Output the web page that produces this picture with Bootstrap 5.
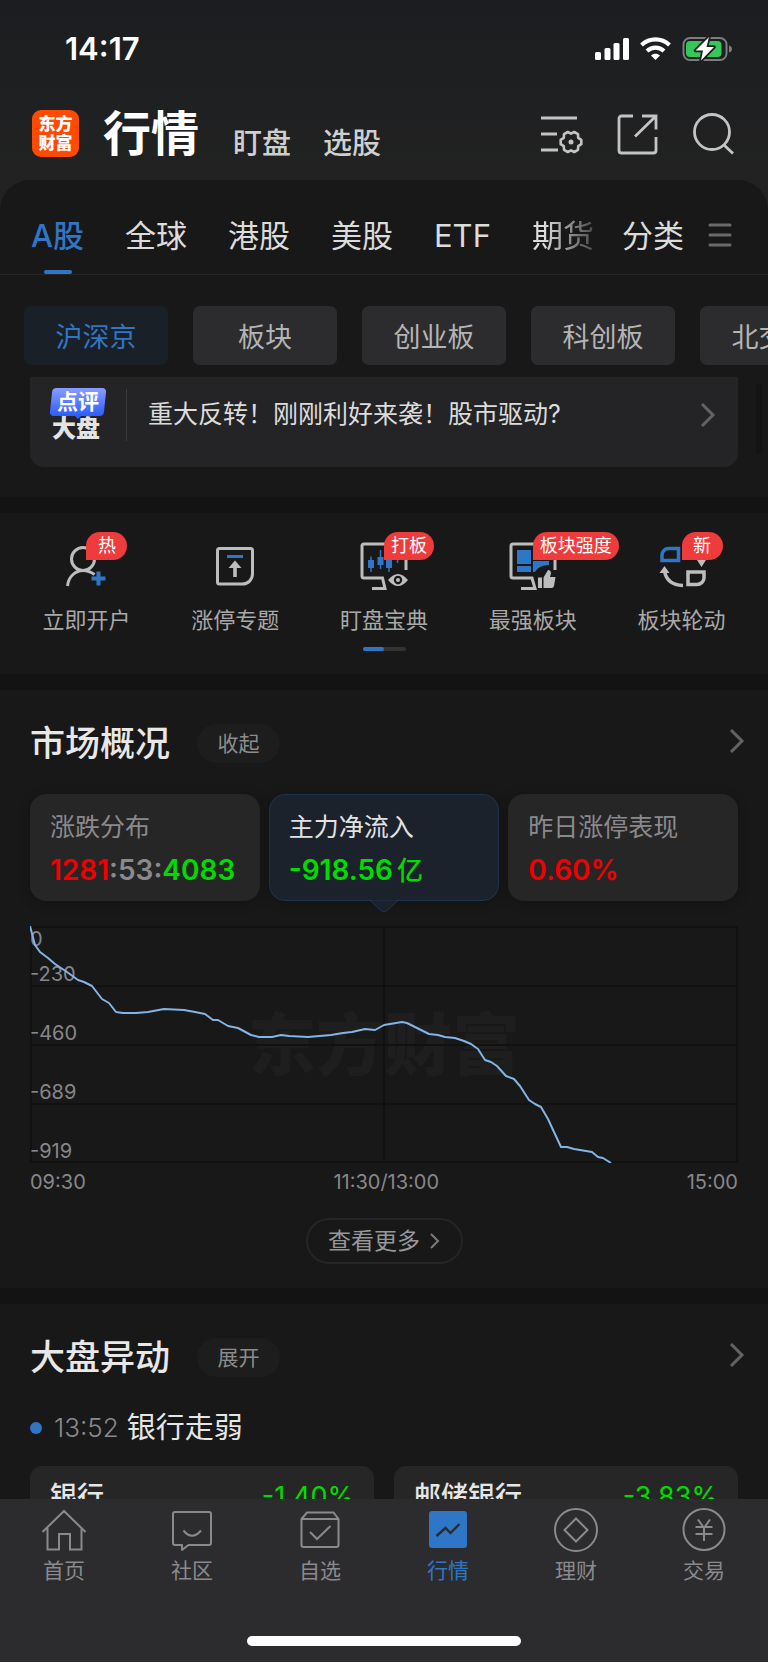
<!DOCTYPE html>
<html lang="zh-CN" data-bs-theme="dark">
<head>
<meta charset="utf-8">
<meta name="viewport" content="width=device-width, initial-scale=1">
<title>行情</title>
<link rel="stylesheet" href="https://cdn.jsdelivr.net/npm/bootstrap@5.3.0/dist/css/bootstrap.min.css">
<style>
:root{--blue:#2f76c6;--panel:#181818;--band:#131313;--tile:#262626;--muted:#8a8a8e;--up:#f00000;--down:#00dc00}
body{background:#1e1f21;color:#e6e6e6;font-family:Inter,"Noto Sans CJK SC",sans-serif}
a{color:inherit;text-decoration:none}
button{font-family:inherit}
svg{display:block;flex:none;fill:none}
.shell{background:linear-gradient(#1c1d20,#1f2021 100px,#222 190px)}
.statusbar{height:98px;padding:0 36px 0 65px;font-size:31px;font-weight:600;line-height:30px;color:#fff}
.topbar{padding:12px 33px 22px 32px}
.logo{width:47px;height:47px;border-radius:9px;background:#ff4a00;color:#fff;font-size:17px;line-height:19px;font-weight:900}
.topbar h1{font-size:48px;line-height:48px;font-weight:700;color:#fff;margin:0 34px 0 24px}
.topbar .sub{font-size:29px;line-height:29px;font-weight:500;color:#cfcfcf;margin-right:32px}
.tools{gap:34px;color:#c4c4c4}
.plain{background:none;border:0;padding:0;color:inherit}
.sheet{background:var(--panel);border-radius:30px 30px 0 0;min-height:0;overflow:auto;scrollbar-width:none}
.sheet::-webkit-scrollbar{display:none}
.markets{padding:0 36px 0 31px;border-bottom:1px solid #252525;font-size:31px;line-height:31px}
.markets a{padding:40px 0 23px;position:relative;white-space:nowrap;color:#dcdcdc}
.markets .tabs{gap:41px}
.markets .on{color:var(--blue);font-weight:500}
.markets .on::after{content:"";position:absolute;bottom:0;left:13px;width:28px;height:4px;border-radius:2px;background:var(--blue)}
.markets .plain{padding-top:16px}
.markets .fade-end{-webkit-mask-image:linear-gradient(90deg,#000 20%,rgba(0,0,0,.25));mask-image:linear-gradient(90deg,#000 20%,rgba(0,0,0,.25))}
.chips{gap:25px;padding:31px 0 0 24px;overflow:hidden}
.chip{flex:0 0 144px;height:59px;border:0;border-radius:7px;background:#2c2c2e;color:#b4b4b4;font-size:27px;line-height:27px;padding:4px 0 0}
.chip.on{background:#1a2028;color:var(--blue)}
.newsrow{padding:12px 30px 30px;position:relative}
.newsrow::after{content:"";position:absolute;right:6px;top:19px;width:6px;height:70px;background:#141414}
.newscard{height:90px;background:#242426;border-radius:0 0 14px 14px;padding:0 22px 14px 20px;color:#dcdcdc;font-size:25px}
.review{width:56px;text-align:center;line-height:24px}
.review .t1{position:relative;z-index:0;height:28px;line-height:28px;font-size:21px;font-weight:700;color:#fff}
.review .t1::before{content:"";position:absolute;z-index:-1;inset:0 1px;border-radius:4px;background:linear-gradient(#8a9cff,#2b5dff);transform:skewX(-6deg)}
.review .t1::after{content:"";position:absolute;left:24px;top:27px;border:4px solid transparent;border-top-color:#2b5dff;border-bottom:0}
.review .t2{font-size:24px;font-weight:900;color:#e4e4e4;line-height:26px;padding-right:4px}
.rule{width:1px;height:52px;background:#3a3a3c;margin:0 21px 0 20px}
.band{border-top:16px solid var(--band)}
.quick{padding:27px 12px 23px}
.quick a{position:relative;flex:1 1 0;color:#a9a9a9;font-size:22px;line-height:22px}
.quick svg{margin:0 auto 19px}
.tagged{position:absolute;left:50%;top:-8px;min-width:41px;height:28px;padding:0 7px;border-radius:14px 14px 14px 0;background:#ee3b3b;color:#fff;font-size:18px;line-height:28px;text-align:center;white-space:nowrap}
.pager{width:43px;height:4px;border-radius:2px;background:#333;margin:16px auto 0}
.pager i{display:block;width:50%;height:4px;border-radius:2px;background:var(--blue)}
.block-pad{padding:33px 30px 24px}
.sec-head{height:40px;margin-right:-7px}
.sec-head h2{font-size:35px;line-height:35px;font-weight:500;margin:0 27px 0 0;color:#e8e8e8}
.sec-head a{padding-bottom:4px}
.pill{width:83px;height:39px;border:0;border-radius:20px;background:#1d1d1d;color:#8c8c8c;font-size:21px;line-height:21px}
.stats{gap:9px;margin-top:31px}
.stat{position:relative;flex:1 1 0;height:107px;text-align:left;border:0;border-radius:16px;background:var(--tile);padding:20px 0 17px 20px;color:var(--muted);box-shadow:0 2px 12px rgba(0,0,0,.25);font-size:25px;line-height:26px}
.stat b{display:block;font-size:28px;line-height:28px;font-weight:600;margin-top:16px;white-space:nowrap}
.stat b .unit{font-size:26px;font-weight:500;margin-left:4px}
.stat.on{background:#1b222c;color:#e2e2e2;border:1px solid #1f3450;padding:19px 0 16px 19px}
.stat.on svg{position:absolute;left:50%;top:104px;margin-left:-14px}
.up{color:var(--up)}.down{color:var(--down)}
.chart{position:relative;margin-top:25px;height:237px;color:#87878b;font-size:20px;line-height:20px}
.chart svg{position:absolute;inset:0;width:100%;height:100%}
.watermark{position:absolute;inset:0;display:flex;align-items:center;justify-content:center;font-size:68px;line-height:68px;font-weight:900;color:#1e1e1e}
.scale{position:absolute;inset:3px 0 0}
.scale span{flex:0 0 59px}
.scale .zero{flex-basis:35px}
.times{margin-top:9px;color:#87878b;font-size:20px;line-height:20px}
.more{width:157px;height:46px;margin:26px auto 0;border:2px solid #252525;border-radius:23px;background:none;color:#97979b;font-size:23px;line-height:23px;gap:10px}
.event{margin-top:36px;font-size:29px;line-height:30px}
.event i{width:12px;height:12px;border-radius:50%;background:var(--blue);margin-right:12px}
.event time{font-size:26px;font-weight:300;color:var(--muted);margin-right:8px}
.movers{gap:20px;margin-top:23px}
.mover{flex:1 1 0;height:120px;border-radius:12px;background:var(--tile);padding:17px 20px;font-size:27px;line-height:27px;font-weight:500}
.mover .down{font-weight:400}
.tabbar{background:#2c2c2e;border-bottom:1px solid #fff;padding:9px 0 16px;color:var(--muted);font-size:21px;line-height:22px}
.tabbar a{flex:1 1 0;text-align:center}
.tabbar svg{margin:0 auto 8px}
.tabbar .on{color:var(--blue)}
.homebar{width:274px;height:10px;border-radius:5px;background:#fff;margin:54px auto 0}
</style>
</head>
<body>
<div class="shell d-flex flex-column vh-100 overflow-hidden">
  <div class="statusbar d-flex flex-shrink-0 align-items-center justify-content-between">
    <span>14:17</span>
    <svg width="138" height="26" viewBox="594 36 138 26">
      <g fill="#fff"><rect x="595" y="52" width="6" height="8" rx="1.500"/><rect x="604.500" y="48" width="6" height="12" rx="1.500"/><rect x="613.500" y="43" width="6" height="17" rx="1.500"/><rect x="623" y="38" width="6" height="22" rx="1.500"/>
      <path d="M655.500 60l-4.500-4.500c2.500-2.200 6.500-2.200 9 0z"/></g>
      <path d="M641.500 45c8-7.500 20-7.500 28 0M647 51c5-4.500 12-4.500 17 0" stroke="#fff" stroke-width="4.200"/>
      <rect x="683.500" y="38" width="43" height="22" rx="6.500" stroke="#7c7d7f" stroke-width="2"/>
      <path d="M729 45.500q3 1 3 3.500t-3 3.500z" fill="#7c7d7f"/>
      <rect x="686" y="41" width="35.500" height="16" rx="4" fill="#34c759"/>
      <path d="M709 37l-13.500 13.500h7.500L701 60.500l13-13.500h-7.500z" fill="#fff" stroke="#1d1e20" stroke-width="3.500" paint-order="stroke" stroke-linejoin="round"/>
    </svg>
  </div>

  <header class="topbar d-flex flex-shrink-0 align-items-end">
    <div class="logo d-flex flex-column align-items-center justify-content-center align-self-start"><span>东方</span><span>财富</span></div>
    <h1>行情</h1>
    <a class="sub" href="#">盯盘</a>
    <a class="sub" href="#">选股</a>
    <div class="tools d-flex ms-auto align-self-center">
      <button class="plain" type="button" aria-label="设置"><svg width="42" height="42" stroke="currentColor" stroke-width="3"><path d="M0 5H36M0 21H16M0 37H17"/><path stroke-linejoin="round" stroke-width="2.600" transform="translate(30 29)" d="M10.300 2.200 7.200 4.200 7 7.800 3.200 10 0 8.300-3.200 10-7 7.800-7.200 4.200-10.300 2.200V-2.200L-7.200-4.200-7-7.800-3.200-10 0-8.300 3.200-10 7-7.800 7.200-4.200 10.300-2.200z"/><circle cx="30" cy="29" r="2.500" fill="currentColor" stroke="none"/></svg></button>
      <button class="plain" type="button" aria-label="分享"><svg width="42" height="42" stroke="currentColor" stroke-width="2.800"><path d="M16 3H4.500a2.500 2.500 0 0 0-2.500 2.500V37.500a2.500 2.500 0 0 0 2.500 2.500H36.500a2.500 2.500 0 0 0 2.500-2.500V24M25 3H39V16.500M39 3 18 23.500"/></svg></button>
      <button class="plain" type="button" aria-label="搜索"><svg width="42" height="42" stroke="currentColor" stroke-width="2.800"><circle cx="19" cy="19" r="17.500"/><path d="M31 32 40 40.500"/></svg></button>
    </div>
  </header>

  <main class="sheet flex-grow-1">
    <nav class="markets d-flex align-items-center">
      <div class="tabs d-flex">
        <a class="on" href="#">A股</a><a href="#">全球</a><a href="#">港股</a><a href="#">美股</a><a href="#">ETF</a><a class="fade-end" href="#">期货</a>
      </div>
      <a class="ms-auto me-4" href="#">分类</a>
      <button class="plain" type="button" aria-label="全部分类"><svg width="24" height="26" stroke="#6a6a6a" stroke-width="3" stroke-linecap="round"><path d="M2 3H22M2 13H22M2 23H22"/></svg></button>
    </nav>

    <div class="chips d-flex">
      <button class="chip on" type="button">沪深京</button><button class="chip" type="button">板块</button><button class="chip" type="button">创业板</button><button class="chip" type="button">科创板</button><button class="chip" type="button">北交所</button>
    </div>

    <div class="newsrow">
      <a class="newscard d-flex align-items-center" href="#">
        <div class="review"><div class="t1">点评</div><div class="t2">大盘</div></div>
        <div class="rule"></div>
        <span>重大反转！刚刚利好来袭！股市驱动?</span>
        <svg class="ms-auto" width="16" height="26" stroke="#636365" stroke-width="3"><path d="M2 2 13 13 2 24"/></svg>
      </a>
    </div>

    <section class="band quick">
      <div class="d-flex text-center">
        <a href="#"><svg width="50" height="50" stroke="#bdbdbd" stroke-width="3"><circle cx="22" cy="19" r="11.500"/><path d="M6.500 46C7.500 36 15 30.500 22 30.500 27 30.500 30 32 33.500 34.500"/><path stroke="#2f76c6" stroke-width="4" d="M37.500 31.500v14M30.500 38.500h14"/></svg><span class="tagged">热</span>立即开户</a>
        <a href="#"><svg width="50" height="50" stroke="#bdbdbd" stroke-width="3"><path d="M9.500 8.500H40.500a2 2 0 0 1 2 2V34a10 10 0 0 1-10 10H9.500a2 2 0 0 1-2-2V10.500a2 2 0 0 1 2-2z"/><path stroke="#2f76c6" d="M17 16.500H33"/><path stroke-width="3.600" d="M25 37V25"/><path fill="#bdbdbd" stroke="none" d="M25 20.500 31.500 28h-13z"/></svg>涨停专题</a>
        <a href="#"><svg width="50" height="50" stroke="#bdbdbd" stroke-width="3"><path d="M47 30V6a2 2 0 0 0-2-2H5a2 2 0 0 0-2 2V36a2 2 0 0 0 2 2H23.500L26 48.500H13"/><path stroke="#2f76c6" stroke-width="1.500" d="M12 16.500V32M21.500 10V29M30 17V32M38.500 8V23"/><path stroke="#2f76c6" stroke-width="6" d="M12 20v8M21.500 17v8M30 20v8M38.500 11v8"/><path fill="#bdbdbd" stroke="none" fill-rule="evenodd" d="M29 40q10-12 20 0-10 12-20 0zM39 35.800a4.200 4.200 0 1 0 .01 0z"/><circle cx="39" cy="40" r="2" fill="#bdbdbd" stroke="none"/></svg><span class="tagged">打板</span>盯盘宝典</a>
        <a href="#"><svg width="50" height="50" stroke="#bdbdbd" stroke-width="3"><path d="M47 30V6a2 2 0 0 0-2-2H5a2 2 0 0 0-2 2V36a2 2 0 0 0 2 2H24L27 48.500H13"/><g fill="#2f76c6" stroke="none"><path d="M9 10H23V24H9zM9 26H23V32H9zM25 10H41V16H25zM25 21H41V25Q31 25 27 32H25z"/></g><path fill="#bdbdbd" stroke="none" d="M30 37.500h4V48h-4zM35.500 37.500 40 30q3 0 3 3.500L42 37h5.500l-1.500 9q-.5 2-2.500 2h-8z"/></svg><span class="tagged">板块强度</span>最强板块</a>
        <a href="#"><svg width="50" height="50" stroke="#bdbdbd" stroke-width="3"><path stroke="#2f76c6" stroke-width="3.500" d="M21.500 8.500V20.500H5V15A6.500 6.500 0 0 1 11.500 8.500z"/><path stroke-width="3.500" d="M31 32H47V38A7 7 0 0 1 40 44.500H31zM7.500 31C9 40 15 45 26 45.500"/><path fill="#bdbdbd" stroke="none" d="M7.500 26 12.500 33h-10zM44.500 27 40 20h9z"/></svg><span class="tagged">新</span>板块轮动</a>
      </div>
      <div class="pager"><i></i></div>
    </section>

    <section class="band block-pad">
      <div class="sec-head d-flex align-items-center">
        <h2>市场概况</h2><button class="pill" type="button">收起</button>
        <a class="ms-auto" href="#" aria-label="市场概况"><svg width="16" height="26" stroke="#636365" stroke-width="3"><path d="M2 2 13 13 2 24"/></svg></a>
      </div>
      <div class="stats d-flex">
        <button class="stat" type="button">涨跌分布<b><span class="up">1281</span>:53:<span class="down">4083</span></b></button>
        <button class="stat on" type="button">主力净流入<b class="down">-918.56<span class="unit">亿</span></b><svg width="28" height="14"><path fill="#1b222c" stroke="#1f3450" d="M0 1.500 10.500 11.500q3.500 2.500 7 0L28 1.500"/></svg></button>
        <button class="stat" type="button">昨日涨停表现<b class="up">0.60%</b></button>
      </div>
      <div class="chart">
        <div class="watermark">东方财富</div>
        <svg viewBox="0 0 708 237" preserveAspectRatio="none"><path stroke="#111" stroke-width="2" d="M0 1H708M0 60H708M0 119H708M0 178H708M0 236H708M1 0V237M354 0V237M707 0V237"/></svg>
        <div class="scale d-flex flex-column"><span class="zero">0</span><span>-230</span><span>-460</span><span>-689</span><span>-919</span></div>
        <svg viewBox="0 0 708 237" preserveAspectRatio="none"><polyline stroke="#82b4e6" stroke-width="2" stroke-linejoin="round" points="0,0 5,19 10,26 18,32 25,38 37,46 48,54 54,56 62,60 72,73 79,77 86,86 93,87 106,87 118,86 134,83 154,84 165,86 175,88 183,94 188,94 198,100 208,102 221,109 229,111 242,111 251,109 259,110 278,111 301,109 313,107 322,106 335,103 345,104 354,99 372,96 377,97 399,108 408,109 415,111 425,112 434,115 441,118 448,123 455,134 461,136 467,140 476,150 484,153 490,160 499,174 505,178 511,181 518,193 524,206 531,221 537,221 544,223 562,226 568,231 573,232 581,237"/></svg>
      </div>
      <div class="times d-flex justify-content-between"><span>09:30</span><span>11:30/13:00</span><span>15:00</span></div>
      <button class="more d-flex align-items-center justify-content-center" type="button">查看更多<svg width="10" height="16" stroke="#7c7c7e" stroke-width="2"><path d="M1 1 8 8 1 15"/></svg></button>
    </section>

    <section class="band block-pad">
      <div class="sec-head d-flex align-items-center">
        <h2>大盘异动</h2><button class="pill" type="button">展开</button>
        <a class="ms-auto" href="#" aria-label="大盘异动"><svg width="16" height="26" stroke="#636365" stroke-width="3"><path d="M2 2 13 13 2 24"/></svg></a>
      </div>
      <div class="event d-flex align-items-center"><i></i><time>13:52</time><span>银行走弱</span></div>
      <div class="movers d-flex">
        <a class="mover d-flex justify-content-between align-items-start" href="#"><span>银行</span><span class="down">-1.40%</span></a>
        <a class="mover d-flex justify-content-between align-items-start" href="#"><span>邮储银行</span><span class="down">-3.83%</span></a>
      </div>
    </section>
  </main>

  <footer class="tabbar flex-shrink-0">
    <nav class="d-flex">
      <a href="#"><svg width="44" height="44" stroke="currentColor" stroke-width="2"><path d="M.500 24 22 3 43.500 24M5.500 20V41.500H17V26H28V41.500H39.500V20"/></svg>首页</a>
      <a href="#"><svg width="44" height="44" stroke="currentColor" stroke-width="2" stroke-linejoin="round"><path d="M5 4H39a2 2 0 0 1 2 2V35a2 2 0 0 1-2 2H18.500L12 42V37H5a2 2 0 0 1-2-2V6a2 2 0 0 1 2-2z"/><path d="M13.500 22.500Q22 33 31 22.500"/></svg>社区</a>
      <a href="#"><svg width="44" height="44" stroke="currentColor" stroke-width="2"><path d="M3.500 11 9 4.500H35.500L40.500 11V37a2 2 0 0 1-2 2H5.500a2 2 0 0 1-2-2zM3.500 11H40.500M12 24l7 7 13.500-13"/></svg>自选</a>
      <a class="on" href="#"><svg width="44" height="44"><rect x="3" y="3" width="38" height="37" rx="3" fill="currentColor"/><path stroke="#2c2c2e" stroke-width="2.400" d="M10.500 28 19.500 20 24.500 25 33.500 16"/></svg>行情</a>
      <a href="#"><svg width="44" height="44" stroke="currentColor" stroke-width="2"><circle cx="22" cy="22" r="21"/><path d="M22 10.500 33.500 22 22 33.500 10.500 22z"/></svg>理财</a>
      <a href="#"><svg width="44" height="44" stroke="currentColor" stroke-width="2"><circle cx="22" cy="21.500" r="20.500"/><path d="M16 11.500 22 20 28 11.500M13.500 19H30.500M13.500 26H30.500M22 19V33"/></svg>交易</a>
    </nav>
    <div class="homebar"></div>
  </footer>
</div>
<script src="https://cdn.jsdelivr.net/npm/bootstrap@5.3.0/dist/js/bootstrap.bundle.min.js"></script>
</body>
</html>
